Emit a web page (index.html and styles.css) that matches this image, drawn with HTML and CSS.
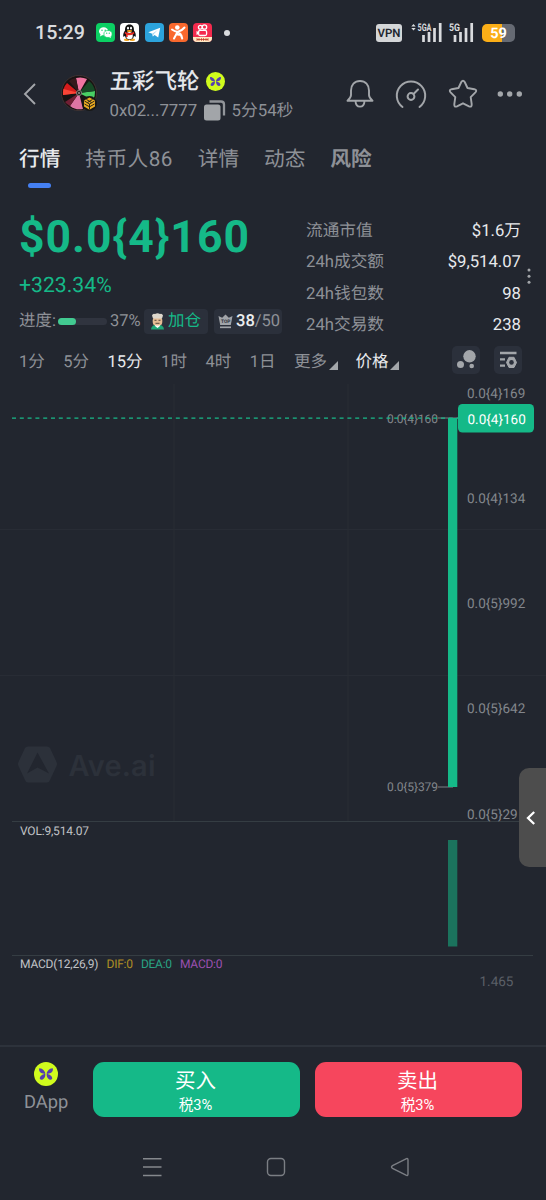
FILE: index.html
```html
<!DOCTYPE html>
<html lang="zh-CN">
<head>
<meta charset="utf-8">
<title>五彩飞轮</title>
<link rel="stylesheet" href="styles.css">
</head>
<body>
<svg width="0" height="0" class="defs">
  <symbol id="butterfly" viewBox="0 0 24 24">
    <circle cx="12" cy="12" r="12" fill="#d0fb1d"/>
    <g fill="#553fae">
      <path d="M11.300 12C11.500 9.500 8.500 6 5.300 6.200C4.300 8.500 6.500 11.300 9 11.500Q10 11.500 11.300 12Z"/>
      <path d="M12.700 12C12.500 9.500 15.500 6 18.700 6.200C19.700 8.500 17.500 11.300 15 11.500Q14 11.500 12.700 12Z"/>
      <path d="M11.300 12C9 11.800 5.500 14 5.800 16.800C7.500 19.300 11.800 16.500 11.300 12Z"/>
      <path d="M12.700 12C15 11.800 18.500 14 18.200 16.800C16.500 19.300 12.200 16.500 12.700 12Z"/>
    </g>
  </symbol>
</svg>
<div class="phone">
  <div class="status">
    <span class="clock">15:29</span>
    <div class="apps">
      <svg viewBox="0 0 19 19"><rect width="19" height="19" rx="4" fill="#0bd063"/><path d="M4.500 11.500L4 13.500L6.200 12.300Z" fill="#fff"/><ellipse cx="7.600" cy="8.300" rx="4.600" ry="4" fill="#fff"/><ellipse cx="12" cy="11" rx="4.100" ry="3.500" fill="#fff" stroke="#0bd063" stroke-width=".7"/><path d="M13 14L15 15L14.500 13Z" fill="#fff"/><g fill="#0bd063"><circle cx="6" cy="7.200" r=".7"/><circle cx="9.200" cy="7.200" r=".7"/><circle cx="10.700" cy="10.200" r=".6"/><circle cx="13.300" cy="10.200" r=".6"/></g></svg>
      <svg viewBox="0 0 19 19"><rect width="19" height="19" rx="4" fill="#fff"/><ellipse cx="6.700" cy="16.700" rx="2.800" ry="1.200" fill="#f6a51c"/><ellipse cx="12.300" cy="16.700" rx="2.800" ry="1.200" fill="#f6a51c"/><path d="M9.500 1.500C6 1.500 5 4 5 7.500C3.500 9.500 2.700 12 3.500 14L5 12.800C5.500 18 13.500 18 14 12.800L15.500 14C16.300 12 15.500 9.500 14 7.500C14 4 13 1.500 9.500 1.500Z" fill="#111"/><ellipse cx="9.500" cy="12.700" rx="3.300" ry="3.600" fill="#fff"/><path d="M4.800 8.700Q9.500 11.500 14.200 8.700V10.700Q9.500 13 7.700 11.900V14H6V11.200L4.800 10.500Z" fill="#e42b22"/><ellipse cx="8" cy="5.200" rx="1" ry="1.400" fill="#fff"/><ellipse cx="11" cy="5.200" rx="1" ry="1.400" fill="#fff"/><ellipse cx="9.500" cy="8" rx="2.700" ry=".9" fill="#f6a51c"/></svg>
      <svg viewBox="0 0 19 19"><rect width="19" height="19" rx="4" fill="#2ca3dc"/><path d="M3.300 9.200L15.200 4.700L13.200 14.400L9.600 11.900L7.900 13.500L7.200 10.800Z" fill="#fff"/><path d="M7.200 10.800L12.800 6.900L8.600 11.200L7.900 13.500Z" fill="#a9d9f2"/></svg>
      <svg viewBox="0 0 19 19"><rect width="19" height="19" rx="4" fill="#f9682d"/><circle cx="8.300" cy="4.500" r="2.300" fill="#fff"/><path d="M3 6.500Q7 9.500 9.500 8.500Q13 7.500 15.500 4.500M8.500 9L5 15.500M10 9.500Q12.500 11.500 13.200 15.500M8.300 11Q10 12.500 11.500 11" fill="none" stroke="#fff" stroke-width="2" stroke-linecap="round"/></svg>
      <svg viewBox="0 0 19 19"><rect width="19" height="19" rx="4" fill="#f42b4e"/><g fill="none" stroke="#fff" stroke-width="1.300"><circle cx="7.300" cy="4.300" r="1.900"/><circle cx="11.500" cy="4" r="2.200"/><rect x="5.600" y="7.300" width="8" height="5.200" rx="1.500"/></g><path d="M5.500 9L3.500 8V12L5.500 11Z" fill="#fff"/><path d="M0 14H19V15Q19 19 15 19H4Q0 19 0 15Z" fill="#ffe9c4"/><path d="M4 15.200V17.800M6 15.200V17.800M8.500 15.200V17.800M10.500 15.200V17.800M13 15.200V17.800M15 15.200V17.800M4 16.500H15" stroke="#c33b26" stroke-width=".8"/></svg>
    </div>
    <i class="dot"></i>
    <span class="vpn">VPN</span>
    <svg class="signal" width="31" height="28" viewBox="0 -4 31 28"><path d="M.3 3.500L2.500 1L4.700 3.500ZM.3 5L2.500 7.500L4.700 5Z" fill="#d9dbde"/><text x="6.500" y="7.800" class="net" textLength="14" lengthAdjust="spacingAndGlyphs">5GA</text><path d="M12.500 12V19M18 9V19M23.500 5V19M29.200 0V19" stroke="#d9dbde" stroke-width="2.700"/></svg>
    <svg class="signal two" width="25" height="28" viewBox="0 -4 25 28"><text x="0" y="7.800" class="net" textLength="11" lengthAdjust="spacingAndGlyphs">5G</text><path d="M6 12V19M11.500 9V19M17 5V19M22.700 0V19" stroke="#d9dbde" stroke-width="2.700"/></svg>
    <div class="battery"><span>59</span></div>
  </div>

  <header class="header">
    <svg class="back" width="14" height="24" viewBox="0 0 14 24"><path d="M12 2L2 12L12 22" fill="none" stroke="#a3a6aa" stroke-width="1.900"/></svg>
    <svg class="coin" width="38" height="38" viewBox="0 0 38 38">
      <circle cx="18" cy="18" r="17.600" fill="#171313" stroke="#4c3b38" stroke-width=".7"/>
      <path d="M18 18L15 3A16 16 0 0 1 26 4Z" fill="#ed75a1"/><path d="M18 18L8 6A16 16 0 0 1 15 3Z" fill="#35191c"/><path d="M18 18L2 20A16 16 0 0 1 6 8Z" fill="#d51b1b"/><path d="M18 18L2 20A16 16 0 0 1 2.500 14Z" fill="#fa4536"/><path d="M18 18L34 16A16 16 0 0 1 32 25Z" fill="#48cf64"/><path d="M18 18L28 6A16 16 0 0 1 34 16Z" fill="#164926"/><path d="M18 18L9 31A16 16 0 0 0 22 34Z" fill="#dd75a3"/><path d="M18 18L4 27A16 16 0 0 0 9 31Z" fill="#701f34"/>
      <circle cx="18" cy="18" r="2.600" fill="#25221f" stroke="#827b77"/><circle cx="18" cy="18" r=".8" fill="#ddd"/>
      <circle cx="28.500" cy="28.500" r="7.500" fill="#181816"/><path d="M28.500 22.500L34 25.600V31.600L28.500 34.700L23 31.600V25.600Z" fill="#e9a921"/><path d="M23.500 26L28.500 29L33.500 26M28.500 29V34.500M25.500 24.500L30.500 27.500M31.500 24.500L26.500 27.500M23.500 29L28.500 31.800L33.500 29" stroke="#181816" fill="none" stroke-width=".9"/>
    </svg>
    <div class="names">
      <div class="name-row"><h1>五彩飞轮</h1><svg width="19" height="19"><use href="#butterfly"/></svg></div>
      <div class="addr-row"><span class="addr">0x02...7777</span><svg width="22" height="21" viewBox="0 0 22 21"><path d="M5.500 1.500H17Q20 1.500 20 4.500V15.500" fill="none" stroke="#92959a" stroke-width="2.300"/><rect x="0" y="4.500" width="16.500" height="16" rx="2.500" fill="#a2a5a9"/></svg><span class="age">5分54秒</span></div>
    </div>
    <div class="actions">
      <svg width="28" height="30" viewBox="0 0 28 30"><path d="M14 2C8.500 2 5 6 5 11.500V16Q5 18.500 1.500 21.800H26.500Q23 18.500 23 16V11.500C23 6 19.500 2 14 2ZM9.500 22C9.800 29.500 18.200 29.500 18.500 22" fill="none" stroke="#a3a6aa" stroke-width="1.900" stroke-linejoin="round"/></svg>
      <svg width="32" height="30" viewBox="0 0 32 30"><path d="M7.500 28A14.200 14.200 0 1 1 24.500 28M18.500 15L23 10.500" fill="none" stroke="#a3a6aa" stroke-width="2" stroke-linecap="round"/><circle cx="16" cy="17.500" r="3.400" fill="none" stroke="#a3a6aa" stroke-width="2"/></svg>
      <svg width="30" height="30" viewBox="0 0 30 30"><path d="M13.300 3Q15 .5 16.700 3L19.500 9L26.300 10.200Q29.500 11 27.400 13.400L22.700 18.200L23.700 25.200Q23.900 28.600 21 27.300L15 24.300L9 27.300Q6.100 28.600 6.300 25.200L7.300 18.200L2.600 13.400Q.5 11 3.700 10.200L10.500 9Z" fill="none" stroke="#a3a6aa" stroke-width="1.900" stroke-linejoin="round"/></svg>
      <svg width="26" height="30" viewBox="0 0 26 30"><g fill="#a3a6aa"><circle cx="3.300" cy="15" r="2.700"/><circle cx="12.700" cy="15" r="2.700"/><circle cx="22.300" cy="15" r="2.700"/></g></svg>
    </div>
  </header>

  <nav class="tabs"><a class="active">行情</a><a class="holders">持币人86</a><a>详情</a><a>动态</a><a class="strong">风险</a></nav>

  <section class="summary">
    <div class="quote">
      <div class="price">$0.0{4}160</div>
      <div class="change">+323.34%</div>
      <div class="progress-row">
        <span>进度:</span><div class="progress"><i></i></div><span class="pct">37%</span>
        <span class="chip add"><svg width="15" height="17" viewBox="0 0 15 17"><path d="M1 16.500Q1.500 11.500 7.500 11.500Q13.500 11.500 14 16.500Z" fill="#20a878"/><path d="M5 10H10V13L7.500 15L5 13Z" fill="#fff"/><rect x="2.700" y="4" width="9.600" height="8.500" rx="3.500" fill="#e6bd94"/><path d="M2 2.500Q3 0 5 1Q7.500-.5 10 1Q12 0 13 2.500L12 5.500H3Z" fill="#ddd7cc"/><path d="M4.500 7.300H6.500M8.500 7.300H10.500M5.500 10.300H9.500" stroke="#493c35" stroke-width=".9"/></svg>加仓</span>
        <span class="chip top"><svg width="15" height="15" viewBox="0 0 15 15"><path d="M.5 2L4.200 3.700L7.500 .5L10.800 3.700L14.500 2L12.800 11H2.200Z" fill="#a1a4a9"/><path d="M2 13.300H13" stroke="#a1a4a9" stroke-width="1.700"/><text x="3" y="9" class="crown-text">TOP</text></svg><b>38</b>/50</span>
      </div>
    </div>
    <dl class="stats">
      <div><dt>流通市值</dt><dd>$1.6万</dd></div>
      <div><dt>24h成交额</dt><dd>$9,514.07</dd></div>
      <div><dt>24h钱包数</dt><dd>98</dd></div>
      <div><dt>24h交易数</dt><dd>238</dd></div>
    </dl>
    <svg class="more-dots" width="4" height="17" viewBox="0 0 4 17"><g fill="#a3a6aa"><circle cx="2" cy="2" r="1.500"/><circle cx="2" cy="8.200" r="1.500"/><circle cx="2" cy="14.300" r="1.500"/></g></svg>
  </section>

  <div class="frames">
    <span>1分</span><span>5分</span><span class="on">15分</span><span>1时</span><span>4时</span><span>1日</span><span class="drop">更多</span><span class="drop on price-drop">价格</span>
    <div class="tools">
      <svg width="28" height="28" viewBox="0 0 28 28"><rect width="28" height="28" rx="5" fill="#2b303b"/><g fill="#a3a6aa"><circle cx="17.500" cy="10.300" r="6.200"/><circle cx="8.500" cy="18.500" r="3.500"/><circle cx="19.700" cy="20" r="2.300"/></g></svg>
      <svg width="28" height="28" viewBox="0 0 28 28"><rect width="28" height="28" rx="5" fill="#2b303b"/><path d="M6 7H22.500M6 13.300H11M6 19.700H11" stroke="#a3a6aa" stroke-width="2.300"/><path d="M15 11.300H20L22.500 16.500L20 21.500H15L12.500 16.500Z" fill="#a3a6aa" stroke="#a3a6aa" stroke-linejoin="round"/><circle cx="17.500" cy="16.400" r="2.300" fill="#2b303b"/></svg>
    </div>
  </div>

  <main class="chart">
    <svg width="546" height="665" viewBox="0 380 546 665">
      <path d="M0 529.500H546M0 675.500H546M174 384V821M348 384V821" stroke="#282c35"/>
      <g fill="#2c313a"><path fill-rule="evenodd" d="M28 746.500H47Q49 746.500 50 748L56.500 762Q57.500 764 56.500 766L50 780Q49 782.500 47 782.500H28Q26 782.500 25 780L18.500 766Q17.500 764 18.500 762L25 748Q26 746.500 28 746.500ZM37.500 752.500L27 773.500L37.500 767.500L49 773.500Z"/><text x="68.500" y="775.500" class="watermark" textLength="87">Ave.ai</text></g>
      <path d="M12 821.500H546M12 955.500H533" stroke="#353d43"/>
      <g class="axis"><text x="467" y="397.500">0.0{4}169</text><text x="467" y="502.500">0.0{4}134</text><text x="467" y="608">0.0{5}992</text><text x="467" y="713">0.0{5}642</text><text x="467" y="818.500">0.0{5}29</text></g>
      <g class="marks"><text x="387" y="422.800" textLength="51">0.0{4}160</text><text x="387" y="791.300" textLength="51">0.0{5}379</text></g>
      <path d="M438 418H458M438 787H453" stroke="#7c8086"/>
      <path d="M12 418.200H458" stroke="#18b989" stroke-width="1.200" stroke-dasharray="4 3.800"/>
      <rect x="448" y="418" width="9.300" height="369" fill="#15b988"/>
      <rect x="458" y="404" width="76" height="28.500" rx="4.500" fill="#15b988"/>
      <text x="467.500" y="424" class="tag">0.0{4}160</text>
      <rect x="448" y="840" width="9.300" height="106.500" fill="#1b735d"/>
      <text x="20" y="834.500" class="legend" textLength="69">VOL:9,514.07</text>
      <text x="20" y="968" class="legend" textLength="78.500">MACD(12,26,9)</text>
      <text x="106.500" y="968" class="legend dif" textLength="26.500">DIF:0</text>
      <text x="141" y="968" class="legend dea" textLength="31">DEA:0</text>
      <text x="180" y="968" class="legend macd" textLength="42.500">MACD:0</text>
      <text x="479.500" y="985.500" class="scale">1.465</text>
    </svg>
    <div class="handle"><svg width="10" height="16" viewBox="0 0 10 16"><path d="M8.200 2L2 8L8.200 14" fill="none" stroke="#fff" stroke-width="2.300"/></svg></div>
  </main>

  <footer class="trade">
    <div class="dapp"><svg width="24" height="24"><use href="#butterfly"/></svg><span>DApp</span></div>
    <button class="buy">买入<small>税3%</small></button>
    <button class="sell">卖出<small>税3%</small></button>
  </footer>
  <div class="system">
    <svg width="20" height="20" viewBox="0 0 20 20"><path d="M1 1.700H19.500M1 10H19.500M1 18.500H19.500" stroke="#85888d" stroke-width="1.500"/></svg>
    <svg width="20" height="20" viewBox="0 0 20 20"><rect x="1.500" y="1.500" width="17" height="17" rx="3.500" fill="none" stroke="#7b7e84" stroke-width="1.400"/></svg>
    <svg width="20" height="20" viewBox="0 0 20 20"><path d="M16 1.800Q18 1 18 3V17Q18 19 16 18.200L2.500 11.300Q.5 10 2.500 8.700Z" fill="none" stroke="#7b7e84" stroke-width="1.400"/></svg>
  </div>
</div>
</body>
</html>
```
FILE: styles.css
```css
* { box-sizing: border-box; }
body { margin: 0; background: #22262f; color: #8e9197; font-family: Roboto, "Noto Sans CJK SC", sans-serif; text-rendering: geometricPrecision; }
svg { display: block; flex: none; }
.defs { position: absolute; }
.phone { width: 546px; height: 1200px; display: flex; flex-direction: column; overflow: hidden; }

.status { height: 65px; padding: 0 31px 0 35px; display: flex; align-items: center; color: #d9dbde; }
.clock { width: 61px; font-size: 19.700px; font-weight: 500; }
.apps { display: flex; gap: 5.300px; }
.apps svg { width: 19px; height: 19px; }
.dot { width: 6px; height: 6px; margin-left: 12px; border-radius: 50%; background: #d9dbde; }
.vpn { width: 26px; height: 18px; margin-left: auto; border-radius: 3px; background: #d4d6d8; color: #22262f; font-size: 11.500px; font-weight: 600; line-height: 19px; text-align: center; }
.signal { margin-left: 9px; }
.signal.two { margin-left: 7px; }
.net { font-size: 10.500px; font-weight: 700; fill: #d9dbde; }
.battery { width: 33px; height: 18px; margin-left: 8px; border-radius: 5px; background: linear-gradient(90deg, #fbae17 60%, #666a73 60%); color: #fff; font-size: 14.500px; font-weight: 700; line-height: 19px; text-align: center; }

.header { height: 65px; display: flex; align-items: center; padding: 0 23px 8px 23px; }
.back { margin-top: 0; }
.coin { margin: 0 0 0 24px; }
.names { margin: 3px 0 0 10.500px; display: flex; flex-direction: column; gap: 2px; }
.name-row, .addr-row { display: flex; align-items: center; }
.name-row { gap: 6px; height: 29px; }
h1 { margin: 2px 0 0; color: #e5e7eb; font-size: 22.500px; font-weight: 500; line-height: 27px; }
.addr-row { height: 26px; font-size: 16.800px; white-space: nowrap; }
.addr { width: 94px; }
.addr-row svg { margin-right: 6px; }
.age { margin-top: -3px; }
.actions { margin-left: auto; display: flex; align-items: center; gap: 21px; }
.actions svg + svg + svg + svg { margin-left: -2px; }

.tabs { height: 80px; padding: 15px 19px 0; display: flex; align-items: flex-start; gap: 24.900px; font-size: 20.700px; line-height: 30px; }
.tabs a { display: flex; flex-direction: column; align-items: center; }
.tabs .holders { letter-spacing: .45px; }
.tabs .active { color: #e8eaed; font-weight: 500; }
.tabs .active::after { content: ""; width: 23px; height: 5px; margin-top: 8px; border-radius: 3px; background: #4580f3; }
.tabs .strong { font-weight: 700; }

.summary { height: 130px; position: relative; display: flex; justify-content: space-between; padding: 0 25px 0 19px; }
.quote { display: flex; flex-direction: column; }
.price { height: 61px; color: #15b988; font-size: 44.500px; font-weight: 700; line-height: 55px; letter-spacing: 1px; }
.change { height: 38px; color: #15b988; font-size: 21.200px; line-height: 30px; }
.progress-row { display: flex; align-items: center; height: 25px; font-size: 16.500px; line-height: 26px; white-space: nowrap; }
.progress { width: 49px; height: 7px; margin: 0 3px 0 2px; border-radius: 4px; background: #30343f; }
.progress i { display: block; width: 37%; height: 7px; border-radius: 4px; background: #42ca91; }
.pct { width: 34px; }
.chip { display: flex; align-items: center; height: 25px; border-radius: 4px; background: #2b303b; }
.add { width: 64px; padding-left: 6px; gap: 3px; color: #15b988; }
.top { width: 68px; margin-left: 6px; padding-left: 4px; }
.top svg { margin-right: 3px; }
.top b { color: #eceef0; font-weight: 500; }
.crown-text { font-size: 4.800px; font-weight: 700; fill: #2b303b; }
.stats { width: 215px; margin: 6px 0 0; }
.stats div { display: flex; justify-content: space-between; height: 31.300px; font-size: 16.700px; line-height: 31px; }
.stats dd { margin: 0; color: #e8eaed; }
.more-dots { position: absolute; right: 15px; top: 58px; }

.frames { height: 40px; padding: 0 24px 0 19px; display: flex; align-items: center; gap: 18.500px; font-size: 16.500px; white-space: nowrap; }
.frames .on { color: #e8eaed; }
.drop { display: flex; align-items: flex-end; }
.drop::after { content: ""; width: 0; height: 0; margin: 0 0 2px 2px; border-left: 9px solid transparent; border-bottom: 9px solid #a3a6aa; }
.price-drop { margin-left: -1px; }
.tools { display: flex; gap: 14px; margin-left: auto; }

.chart { height: 665px; position: relative; }
.axis, .scale { font-size: 13.500px; fill: #83868c; }
.scale { fill: #5b5f67; }
.tag { font-size: 13.500px; fill: #fff; }
.marks { font-size: 12px; fill: #83868c; }
.legend { font-size: 12px; fill: #c0c2c6; }
.dif { fill: #ae8d25; }
.dea { fill: #2aa284; }
.macd { fill: #9b50af; }
.watermark { font-family: Inter, sans-serif; font-size: 29px; font-weight: 600; }
.handle { position: absolute; right: 0; top: 388px; width: 27px; height: 99px; border-radius: 10px 0 0 10px; background: #4d4d4d; display: flex; align-items: center; padding-left: 7px; }

.trade { height: 88px; border-top: 2px solid #2d323b; padding: 15px 24px 0; display: flex; align-items: flex-start; }
.dapp { width: 69px; display: flex; flex-direction: column; font-size: 18.300px; line-height: 34px; }
.dapp svg { margin-left: 9.500px; }
.trade button { width: 207px; height: 55px; padding: 2px 2px 0 0; border: 0; border-radius: 11px; color: #fff; font: 20.500px/34px Roboto, "Noto Sans CJK SC", sans-serif; display: flex; flex-direction: column; align-items: center; }
.trade small { font-size: 14.700px; line-height: 15px; }
.buy { background: #15b988; }
.trade .sell { margin-left: 15px; background: #f6465d; }
.system { display: flex; gap: 104px; padding: 24px 0 0 142px; }
```
